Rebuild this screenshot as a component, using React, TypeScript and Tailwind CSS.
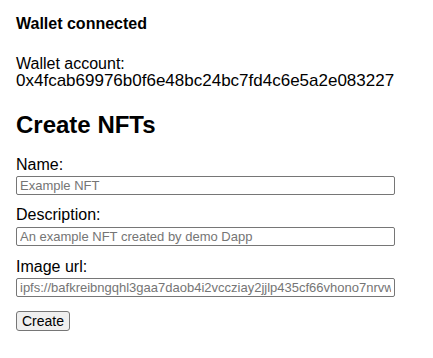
export default function App() {
  return (
    <div className="pl-4 pt-[15px] text-black bg-white min-h-screen" style={{ fontFamily: '"Liberation Sans", Arial, sans-serif' }}>
      <p className="font-bold text-base leading-[18px]">Wallet connected</p>

      <div className="mt-[22px]">
        <p className="text-base leading-[17px]">Wallet account:</p>
        <p className="text-[17px] leading-[17px]">0x4fcab69976b0f6e48bc24bc7fd4c6e5a2e083227</p>
      </div>

      <h2 className="mt-[22px] text-2xl font-bold leading-[28px]">Create NFTs</h2>

      <form className="mt-[17px] flex flex-col" onSubmit={(e) => e.preventDefault()}>
        <label className="text-base leading-[18px]">Name:</label>
        <input
          className="mt-[2px] w-[379px] h-[19px] border border-[#767676] rounded-[2px] px-[3px] text-[13px] placeholder:text-[#757575]"
          placeholder="Example NFT"
        />

        <label className="mt-[11px] text-base leading-[18px]">Description:</label>
        <input
          className="mt-[3px] w-[379px] h-[19px] border border-[#767676] rounded-[2px] px-[3px] text-[13px] placeholder:text-[#757575]"
          placeholder="An example NFT created by demo Dapp"
        />

        <label className="mt-[12px] text-base leading-[18px]">Image url:</label>
        <input
          className="mt-[2px] w-[379px] h-[19px] border border-[#767676] rounded-[2px] px-[3px] text-[13px] placeholder:text-[#757575]"
          placeholder="ipfs://bafkreibngqhl3gaa7daob4i2vccziay2jjlp435cf66vhono7nrvww53ty"
        />

        <div className="mt-[12px]">
          <button
            type="submit"
            className="w-[54px] h-[20px] border border-[#767676] rounded-[3px] bg-[#efefef] text-[14px] leading-none"
          >
            Create
          </button>
        </div>
      </form>
    </div>
  );
}
